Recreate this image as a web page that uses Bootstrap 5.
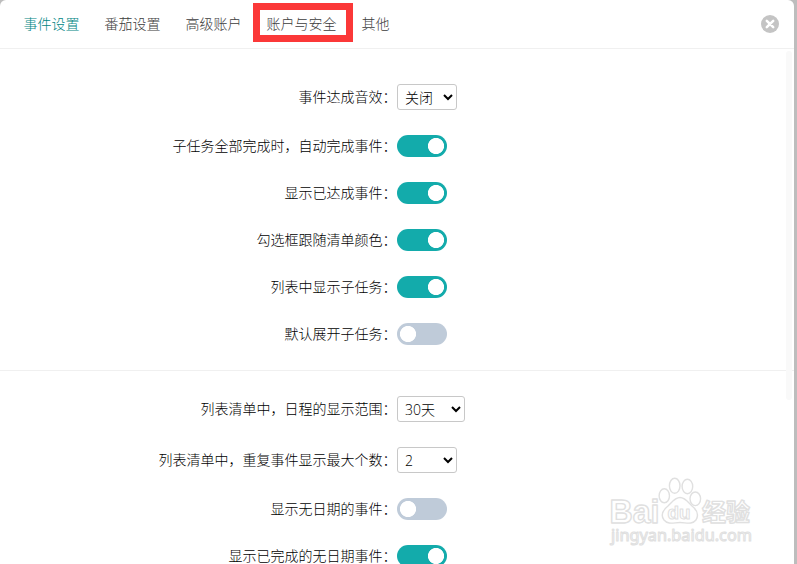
<!DOCTYPE html>
<html lang="zh-CN">
<head>
<meta charset="utf-8">
<meta name="viewport" content="width=device-width, initial-scale=1">
<title>事件设置</title>
<link href="https://cdn.jsdelivr.net/npm/bootstrap@5.3.0/dist/css/bootstrap.min.css" rel="stylesheet">
<style>
body{background:#bdbdbd;font-family:"Noto Sans CJK SC",sans-serif;font-size:14px;font-weight:300;line-height:20px;color:#000}
.panel{width:794px;border-radius:6px 6px 0 0}
.topbar{height:49px;border-bottom:1px solid #f0f0f0;padding:0 15px 0 24px}
.tabs{gap:25px;margin:-2px 0 0 -.4px}
.tabs .nav-link{color:#3c3c3c;padding:0;line-height:20px}
.tabs .nav-link.active{color:#008583}
.marker{left:-13.6px;top:-10px;width:100px;height:39px;border:7px solid #fb3838;pointer-events:none}
.group-a{padding-top:35px;border-bottom:1px solid #f0f0f0}
.group-b{padding-top:25px}
.setting{margin-bottom:25px}
.setting label{width:397px;padding:0 .6px 2px 0;text-align:right;line-height:20px}
.picker{height:26px;width:60px;border:1px solid #c8c8c8;border-radius:3px;padding:1px 0 0 3px;background:#fff;color:#000;font:300 14px "Open Sans","Noto Sans CJK SC",sans-serif}
.picker.wide{width:68px}
.setting .form-switch{height:22px;min-height:0;padding:0;margin:0}
.setting .form-switch .form-check-input{width:50px;height:22px;margin:0;float:none;display:block;border:0;border-radius:11px;background:#bfcbd9 radial-gradient(circle at 11px 11px,#fff 7.7px,transparent 8.4px);box-shadow:none}
.setting .form-switch .form-check-input:checked{background:#13abab radial-gradient(circle at 39px 11px,#fff 7.7px,transparent 8.4px)}
.track{right:2px;top:51px;width:6px;height:349px;background:#f9f9f9;border-radius:3px}
.watermark{left:602px;top:470px}
</style>
<script src="https://cdn.jsdelivr.net/npm/bootstrap@5.3.0/dist/js/bootstrap.bundle.min.js"></script>
</head>
<body class="vh-100 overflow-hidden">
<main class="panel bg-white vh-100 position-relative overflow-hidden">
  <header class="topbar d-flex align-items-center justify-content-between">
    <nav class="tabs nav flex-nowrap">
      <a class="nav-link active" href="#">事件设置</a>
      <a class="nav-link" href="#">番茄设置</a>
      <a class="nav-link" href="#">高级账户</a>
      <a class="nav-link position-relative" href="#">账户与安全<span class="marker position-absolute"></span></a>
      <a class="nav-link" href="#">其他</a>
    </nav>
    <button type="button" class="btn border-0 p-0 d-flex" aria-label="关闭">
      <svg width="18" height="18" viewBox="0 0 18 18"><circle cx="9" cy="9" r="9" fill="#c4c4c4"/><path d="M5.8 5.8l6.4 6.4M12.2 5.8l-6.4 6.4" stroke="#fff" stroke-width="2.5" stroke-linecap="round"/></svg>
    </button>
  </header>
  <section class="group-a">
    <div class="setting d-flex align-items-center"><label for="s1">事件达成音效：</label><select id="s1" class="picker"><option>关闭</option></select></div>
    <div class="setting d-flex align-items-center"><label for="s2">子任务全部完成时，自动完成事件：</label><div class="form-check form-switch"><input id="s2" class="form-check-input" type="checkbox" role="switch" checked></div></div>
    <div class="setting d-flex align-items-center"><label for="s3">显示已达成事件：</label><div class="form-check form-switch"><input id="s3" class="form-check-input" type="checkbox" role="switch" checked></div></div>
    <div class="setting d-flex align-items-center"><label for="s4">勾选框跟随清单颜色：</label><div class="form-check form-switch"><input id="s4" class="form-check-input" type="checkbox" role="switch" checked></div></div>
    <div class="setting d-flex align-items-center"><label for="s5">列表中显示子任务：</label><div class="form-check form-switch"><input id="s5" class="form-check-input" type="checkbox" role="switch" checked></div></div>
    <div class="setting d-flex align-items-center"><label for="s6">默认展开子任务：</label><div class="form-check form-switch"><input id="s6" class="form-check-input" type="checkbox" role="switch"></div></div>
  </section>
  <section class="group-b">
    <div class="setting d-flex align-items-center"><label for="s7">列表清单中，日程的显示范围：</label><select id="s7" class="picker wide"><option>30天</option></select></div>
    <div class="setting d-flex align-items-center"><label for="s8">列表清单中，重复事件显示最大个数：</label><select id="s8" class="picker"><option>2</option></select></div>
    <div class="setting d-flex align-items-center"><label for="s9">显示无日期的事件：</label><div class="form-check form-switch"><input id="s9" class="form-check-input" type="checkbox" role="switch"></div></div>
    <div class="setting d-flex align-items-center"><label for="s10">显示已完成的无日期事件：</label><div class="form-check form-switch"><input id="s10" class="form-check-input" type="checkbox" role="switch" checked></div></div>
  </section>
  <div class="track position-absolute"></div>
  <svg class="watermark position-absolute" width="160" height="90" viewBox="602 470 160 90" fill="#fff" stroke="#e0e0e0" stroke-width="1.4" stroke-linejoin="round">
    <ellipse cx="664.3" cy="495.8" rx="5.2" ry="7"/>
    <ellipse cx="674.7" cy="485.8" rx="5.3" ry="7.5"/>
    <ellipse cx="687.4" cy="486.5" rx="5.3" ry="7.2"/>
    <ellipse cx="695.3" cy="498.8" rx="5.3" ry="6.8"/>
    <path d="M680 497.500C675 497.500 672 502 668 506C662 511 661 516 664 520C668 525 674 522.500 680 522.500C686 522.500 692 525 696 520C699 515 697 510 692 506C688 502 685 497.500 680 497.500Z"/>
    <g font-family="Liberation Sans, sans-serif" font-weight="bold">
      <text x="609.5" y="522.5" font-size="33" textLength="50" lengthAdjust="spacingAndGlyphs">Bai</text>
      <text x="667.5" y="519" font-size="18" stroke-width="1" textLength="23" lengthAdjust="spacingAndGlyphs">du</text>
      <text x="702" y="521" font-size="24" font-family="Noto Sans CJK SC, sans-serif" textLength="48">经验</text>
    </g>
    <text x="611" y="540.5" font-size="17" stroke-width="1.1" font-family="Noto Sans, sans-serif" font-weight="400" textLength="141" lengthAdjust="spacingAndGlyphs">jingyan.baidu.com</text>
  </svg>
</main>
</body>
</html>
